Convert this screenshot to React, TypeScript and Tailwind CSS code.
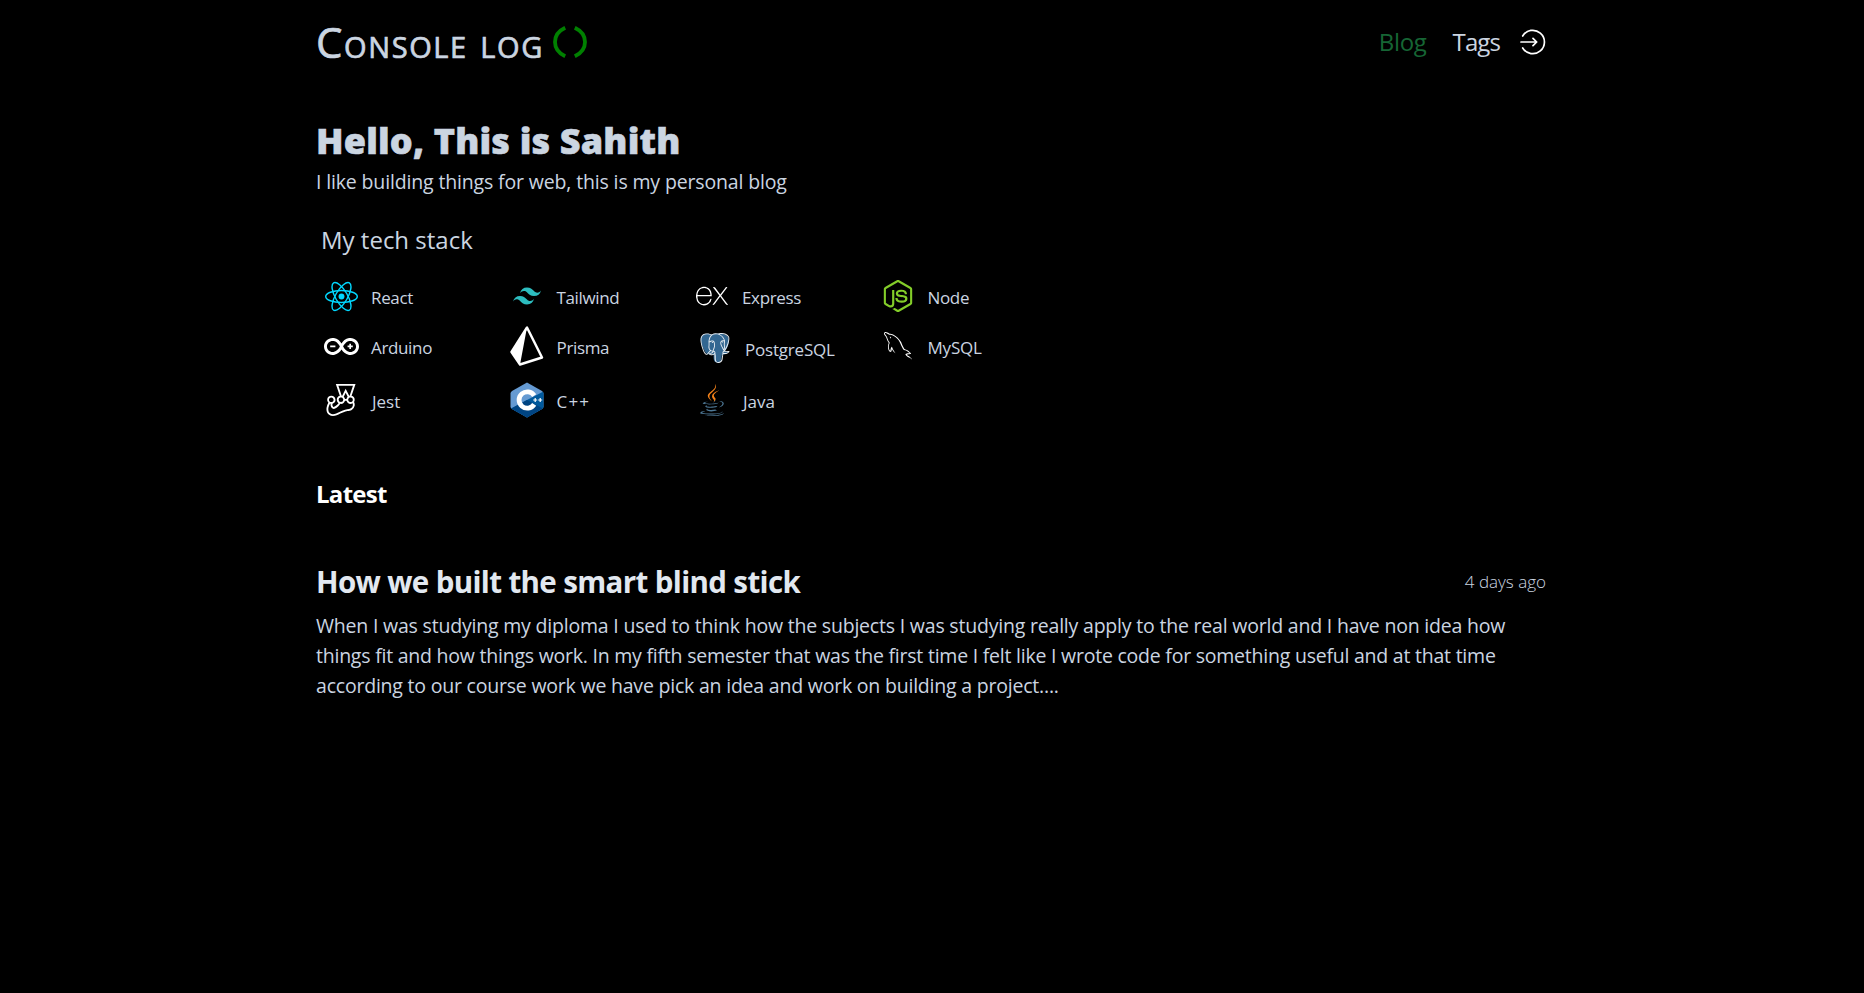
import React from 'react';
import { SiTailwindcss, SiExpress, SiNodedotjs, SiArduino, SiPostgresql, SiJest } from 'react-icons/si';
import { FaJava } from 'react-icons/fa';
import { GrMysql } from 'react-icons/gr';

const ReactLogo = () => (
  <svg width="33" height="31" viewBox="-11.5 -10.4 23 20.8" fill="none" stroke="#00d8ff">
    <circle r="2.05" fill="#00d8ff" stroke="none" />
    <ellipse rx="11" ry="4.2" />
    <ellipse rx="11" ry="4.2" transform="rotate(60)" />
    <ellipse rx="11" ry="4.2" transform="rotate(120)" />
  </svg>
);

const PrismaLogo = () => (
  <svg width="34" height="40" viewBox="0 0 34 40">
    <path d="M17 1.5 L1.5 26 L10 38.5 L32 31.5 Z" fill="none" stroke="#fff" strokeWidth="2.4" strokeLinejoin="round" />
    <path d="M17 1.5 L1.5 26 L10 38.5 Z" fill="#fff" />
  </svg>
);

const CppLogo = () => (
  <svg width="34" height="36" viewBox="0 0 34 36">
    <path d="M17 0.5 L32 9 Q33.5 10 33.5 11.5 V24.5 Q33.5 26 32 27 L17 35.5 L2 27 Q.5 26 .5 24.5 V11.5 Q.5 10 2 9 Z" fill="#659ad2" />
    <path d="M33 9.8 L17 18 L1.2 26.4 L17 35.5 L32 27 Q33.5 26 33.5 24.5 V11.5 Z" fill="#00599c" />
    <path d="M17 18 L1.2 26.4 L17 35.5 L32.8 26.4 Z" fill="#004482" />
    <path d="M24.2 13.6 A8.2 8.2 0 1 0 24.2 22.4" fill="none" stroke="#fff" strokeWidth="4.8" />
    <path d="M23.2 18h4M25.2 16v4M28.2 18h4M30.2 16v4" stroke="#fff" strokeWidth="1.2" />
  </svg>
);

const PostgresLogo = () => (
  <span className="relative block h-[30px] w-[30px]">
    <svg width="30" height="30" viewBox="0 0 24 24" fill="#336791">
      <path d="M1 3C3 0 7 .5 9 1.2C14 -.2 19 0 22 2.500C24 5 23 11 20 14.500L22.800 15Q21 17.500 17.500 17.300C17 21 17 23.700 13.700 23.600C10.500 23.500 11 20 10.800 17L7 17Q5 17.500 3.500 14C1 9 0 5 1 3Z" />
    </svg>
    <SiPostgresql size={30} color="#e8eef3" className="absolute inset-0" />
  </span>
);

const JavaLogo = () => (
  <span className="relative block h-8 w-6">
    <FaJava size={32} color="#4e7896" className="-ml-1 [clip-path:polygon(0_50%,45%_56%,56%_56%,62%_48%,100%_48%,100%_100%,0_100%)]" />
    <FaJava size={32} color="#f58219" className="absolute top-0 -left-1 [clip-path:polygon(0_0,100%_0,100%_48%,62%_48%,56%_56%,45%_56%,32%_50%,0_50%)]" />
  </span>
);

const SignInIcon = () => (
  <svg width="26" height="26" viewBox="0 0 26 26" fill="none" stroke="#fff" strokeWidth="1.7" strokeLinecap="round" strokeLinejoin="round">
    <path d="M2.700 7A11.700 11.700 0 1 1 2.700 19" />
    <path d="M1 13H16.500M13 9.300L16.700 13L13 16.700" />
  </svg>
);

const stack = [
  { name: 'React', icon: <ReactLogo /> },
  { name: 'Tailwind', icon: <SiTailwindcss size={28} color="#2dbdbf" /> },
  { name: 'Express', icon: <SiExpress size={32} color="#fff" /> },
  { name: 'Node', icon: <SiNodedotjs size={32} color="#83cd29" /> },
  { name: 'Arduino', icon: <SiArduino size={35} color="#fff" /> },
  { name: 'Prisma', icon: <PrismaLogo /> },
  { name: 'PostgreSQL', icon: <PostgresLogo />, item: 'pt-1 pl-[3px]', label: 'tracking-[-0.2px]' },
  { name: 'MySQL', icon: <GrMysql size={28} color="#fff" />, label: 'tracking-[-0.2px]' },
  { name: 'Jest', icon: <SiJest size={32} color="#fff" />, label: 'tracking-normal pl-px' },
  { name: 'C++', icon: <CppLogo />, label: 'tracking-[1.2px]' },
  { name: 'Java', icon: <JavaLogo />, label: 'tracking-normal pl-px' },
];

export default function App() {
  return (
    <div className="min-h-screen bg-black font-['Open_Sans',sans-serif] text-[#cbd5e1]">
      <div className="mx-auto w-[1232px] pr-0.5">
        <header className="flex h-[84px] items-center justify-between">
          <div className="flex items-center gap-[9px]">
            <h1 className="pb-0.5 text-[42px] font-medium tracking-[1.6px] [-webkit-text-stroke:0.7px_#cbd5e1] [font-variant:small-caps]">Console log</h1>
            <svg width="34" height="32" viewBox="0 0 34 32" fill="none" stroke="#008000" strokeWidth="3.8">
              <path d="M12.200 1.700Q2 6.500 2 16T12.200 30.300M21.800 1.700Q32 6.500 32 16T21.800 30.300" />
            </svg>
          </div>
          <nav className="flex items-center text-2xl">
            <a className="mr-[26px] tracking-[-0.3px] text-[#166534]">Blog</a>
            <a className="mr-5 tracking-[-0.9px]">Tags</a>
            <SignInIcon />
          </nav>
        </header>

        <h2 className="mt-[37px] text-4xl leading-10 font-extrabold tracking-[0.17px] [-webkit-text-stroke:0.6px_#cbd5e1]">Hello, This is Sahith</h2>
        <p className="mt-[7px] text-[19.5px] leading-7 tracking-[-0.15px]">I like building things for web, this is my personal blog</p>

        <p className="mt-7 pl-[5px] text-2xl leading-8">My tech stack</p>
        <ul className="mt-[17px] ml-[5px] grid w-[742px] grid-cols-4 grid-rows-[46px_54px_54px]">
          {stack.map((s) => (
            <li key={s.name} className={`flex items-center gap-2.5 text-[17px] tracking-[-0.35px] ${s.item ?? ''}`}>
              <span className="flex w-10 justify-center">{s.icon}</span>
              <span className={`pt-[3px] ${s.label ?? ''}`}>{s.name}</span>
            </li>
          ))}
        </ul>

        <h3 className="mt-[51px] text-2xl leading-8 font-bold tracking-[-0.7px] text-white">Latest</h3>

        <div className="mt-[54px] flex items-center justify-between">
          <h4 className="text-[29.5px] leading-9 font-bold tracking-[-0.63px] text-[#e2e8f0]">How we built the smart blind stick</h4>
          <span className="text-[17px] font-light">4 days ago</span>
        </div>
        <div className="mt-[11px] text-[19.5px] leading-[30px] whitespace-nowrap">
          <p className="tracking-[-0.2px]">When I was studying my diploma I used to think how the subjects I was studying really apply to the real world and I have non idea how</p>
          <p className="tracking-[-0.23px]">things fit and how things work. In my fifth semester that was the first time I felt like I wrote code for something useful and at that time</p>
          <p className="tracking-[-0.21px]">according to our course work we have pick an idea and work on building a project....</p>
        </div>
      </div>
    </div>
  );
}
